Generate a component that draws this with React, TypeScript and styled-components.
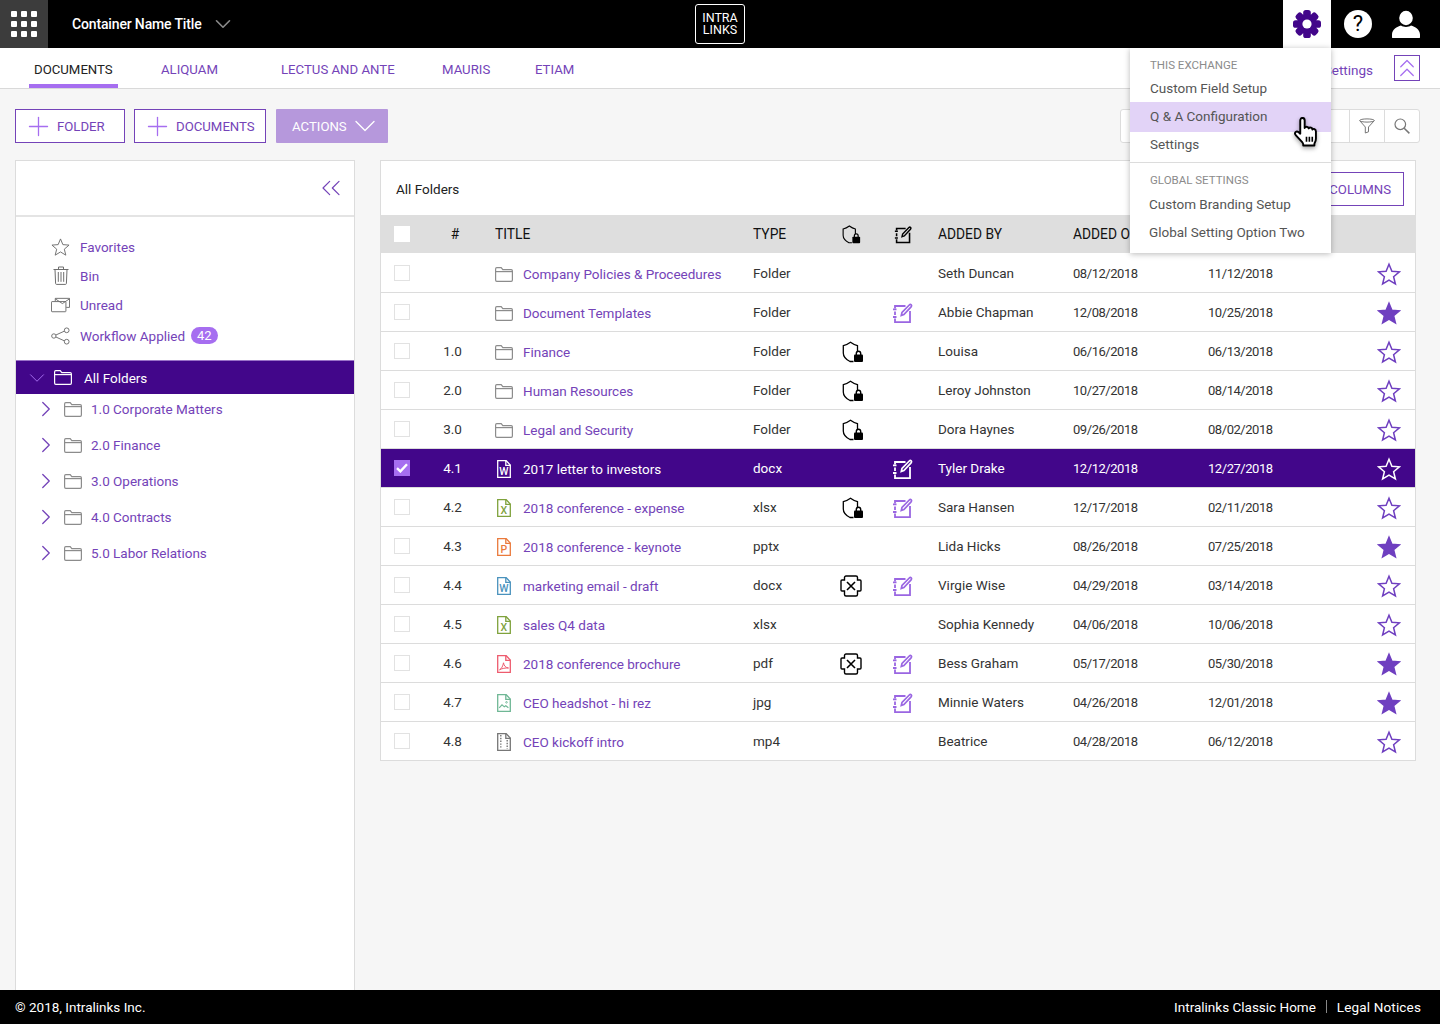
import React from 'react'
import styled, { createGlobalStyle } from 'styled-components'
import { ChevronDown, ChevronRight, ChevronsLeft, ChevronsUp, Plus } from 'lucide-react'

const PURPLE = '#7443b8'
const DARK = '#42068a'
const ACCENT = '#a66ef0'
const ICON_GRAY = '#6e6e6e'

const GlobalStyle = createGlobalStyle`
  html, body { margin: 0; padding: 0; }
  body { font-family: Roboto, "Liberation Sans", sans-serif; background: #f6f6f6; color: #333; }
  * { box-sizing: border-box; }
`

/* ---------- icons ---------- */

const FolderIcon = ({ color = '#8c8c8c' }: { color?: string }) => (
  <svg width="18" height="15" viewBox="0 0 18 15" fill="none" stroke={color} strokeWidth="1.2">
    <path d="M.6 13V2c0-.8.5-1.300 1.200-1.300h4.400l1.600 2h8.400c.7 0 1.200.5 1.200 1.200V13c0 .8-.5 1.300-1.200 1.300H1.800C1.100 14.300.6 13.800.6 13Z" />
    <path d="M.6 4.600h16.800" />
  </svg>
)

const FileIcon = ({ color, letter }: { color: string; letter?: string }) => (
  <svg width="14" height="18" viewBox="0 0 14 18" fill="none" stroke={color} strokeWidth="1.3">
    <path d="M.7.7h8.500l4.100 4.300v12.300H.7Z" />
    <path d="M8.800.7v4.700h4.500" />
    {letter && (
      <text x="6.900" y="14.800" fontSize="10.500" fontFamily="Roboto, sans-serif" fontWeight="500" textAnchor="middle" fill={color} stroke="none">
        {letter}
      </text>
    )}
  </svg>
)

const PdfFile = ({ color }: { color: string }) => (
  <svg width="14" height="18" viewBox="0 0 14 18" fill="none" stroke={color} strokeWidth="1.3">
    <path d="M.7.7h8.500l4.100 4.300v12.300H.7Z" />
    <path d="M8.800.7v4.700h4.500" />
    <path d="M2.500 14.800c2-1 3.500-3.800 4-7 .5 3 2 4.800 5 5.200-3-.2-6.500.4-9 1.800Z" strokeWidth="1" />
  </svg>
)

const ImageFile = ({ color }: { color: string }) => (
  <svg width="14" height="18" viewBox="0 0 14 18" fill="none" stroke={color} strokeWidth="1.3">
    <path d="M.7.7h8.500l4.100 4.300v12.300H.7Z" />
    <path d="M8.800.7v4.700h4.500" />
    <path d="M2.200 13.800l2.800-3 2.300 2 1.500-1 2.600 2" strokeWidth="1.100" />
    <circle cx="9.500" cy="8.300" r=".8" strokeWidth=".9" />
  </svg>
)

const VideoFile = ({ color }: { color: string }) => (
  <svg width="14" height="18" viewBox="0 0 14 18" fill="none" stroke={color} strokeWidth="1.3">
    <path d="M.7.7h8.500l4.100 4.300v12.300H.7Z" />
    <path d="M8.800.7v4.700h4.500" />
    <path d="M3.800 2v14M10.200 7v9" strokeDasharray="1.400 1.400" strokeWidth="1.400" />
  </svg>
)

const LockShield = ({ size = 22 }: { size?: number }) => (
  <svg width={size} height={size} viewBox="0 0 22 22" fill="none">
    <path d="M11.500 20.500H8C4 18.500 1.300 15.500 1.300 12V4.700C4 4 6 3 8.500 1.200c2.500 1.800 4.500 2.800 7 3.500v5.800" stroke="#000" strokeWidth="1.300" />
    <rect x="12" y="13.500" width="9" height="7.500" rx="1" fill="#000" />
    <path d="M14.300 14v-1.500a2.200 2.200 0 0 1 4.400 0V14" stroke="#000" strokeWidth="1.400" />
  </svg>
)

const CrossShield = () => (
  <svg width="22" height="22" viewBox="0 0 22 22" fill="none" stroke="#000" strokeWidth="1.400">
    <path d="M6 1h10c.8 0 1.500.7 1.500 1.500V5H20c.6 0 1 .4 1 1v9c0 .6-.4 1-1 1h-2.500v3.500c0 .8-.7 1.500-1.500 1.500H6c-.8 0-1.500-.7-1.500-1.500V16H2c-.6 0-1-.4-1-1V6c0-.6.4-1 1-1h2.500V2.500C4.500 1.700 5.200 1 6 1Z" />
    <path d="M7 7l8 8M15 7l-8 8" strokeWidth="1.600" />
  </svg>
)

const EditIcon = ({ color, size = 22 }: { color: string; size?: number }) => (
  <svg width={size} height={size} viewBox="0 0 22 22" fill="none" stroke={color}>
    <path d="M3 6.500V4h10.500M18 9v11.200H3v-3.700M3 9.500v3.500" strokeWidth="1.800" />
    <path d="M1 7.300h3.500M1 15h3.500" strokeWidth="1.800" />
    <path d="M9.300 13.500l.7-3L17.300 3c.6-.6 1.400-.6 1.900-.1.500.5.500 1.300-.1 1.900L11.900 12.600Z" strokeWidth="1.700" />
  </svg>
)

const StarIcon = ({ color, filled }: { color: string; filled?: boolean }) => (
  <svg width="24" height="24" viewBox="0 0 24 24" fill={filled ? color : 'none'} stroke={color} strokeWidth="1.500" strokeLinejoin="miter">
    <path d="M12 2.200l2.900 7 7.500.6-5.800 4.900 1.800 7.300-6.400-3.900-6.400 3.900 1.800-7.300-5.800-4.900 7.500-.6Z" />
  </svg>
)

const GearIcon = () => (
  <svg width="30" height="30" viewBox="0 0 30 30">
    {[0, 45, 90, 135, 180, 225, 270, 315].map((a) => (
      <rect key={a} x="11.200" y="1" width="7.600" height="10" rx="2.600" fill={DARK} transform={`rotate(${a} 15 15)`} />
    ))}
    <circle cx="15" cy="15" r="10" fill={DARK} />
    <circle cx="15" cy="15" r="4.600" fill="#fff" />
  </svg>
)

const UserIcon = () => (
  <svg width="28" height="28" viewBox="0 0 28 28" fill="#fff">
    <ellipse cx="14" cy="8" rx="6.800" ry="7.200" />
    <path d="M0 27.500v-3C0 19.500 5 16.500 9 15.500c1.500 1 3 1.400 5 1.400s3.500-.4 5-1.400c4 1 9 4 9 9v3c0 .3-.2.500-.5.500H.5c-.3 0-.5-.2-.5-.5Z" />
  </svg>
)

const HandCursor = () => (
  <svg width="25" height="33" viewBox="0 0 26 34">
    <path
      d="M6.500 3.500c0-1.600 1-2.700 2.300-2.700s2.300 1.100 2.300 2.700v7.700c.5-1 1.200-1.300 2-1.300 1.200 0 1.900.7 2.100 1.800.5-.7 1.200-1 2-.9 1.100.1 1.800.9 1.900 2 .5-.5 1.200-.7 1.900-.5 1.200.3 1.800 1.300 1.800 2.600v7.300c0 1.700-.4 3.100-1.200 4.400-.3.500-.4 1.100-.4 1.800v1.100H9.600v-1.100c0-1-.5-1.800-1.300-2.700L2 19c-1-1.100-1.300-2.400-.4-3.400.9-.9 2.300-.8 3.300.1l1.600 1.500Z"
      fill="#fff"
      stroke="#000"
      strokeWidth="2"
      strokeLinejoin="round"
    />
    <path d="M13 20.500v5M16 20.500v5M19 20.500v5" stroke="#000" strokeWidth="1.700" />
  </svg>
)

const FilterIcon = () => (
  <svg width="16" height="16" viewBox="0 0 16 16" fill="none" stroke="#777" strokeWidth="1">
    <ellipse cx="8" cy="2.500" rx="7.300" ry="1.600" />
    <path d="M.8 2.800L6.300 9v6l3.200-1.200V9l5.700-6.200" />
  </svg>
)

const SearchGlyph = () => (
  <svg width="16" height="16" viewBox="0 0 16 16" fill="none" stroke="#777" strokeWidth="1.200">
    <circle cx="6.300" cy="6.300" r="5.300" />
    <path d="M10.200 10.200l5.200 5.200" strokeWidth="1.500" />
  </svg>
)

const StarOutline = () => (
  <svg width="20" height="20" viewBox="0 0 20 20" fill="none" stroke={ICON_GRAY} strokeWidth="1">
    <path d="M10 1.500l2.500 6 6.500.5-5 4.300 1.600 6.300L10 15.200l-5.600 3.400L6 12.300 1 8l6.500-.5Z" />
  </svg>
)

const BinIcon = () => (
  <svg width="16" height="19" viewBox="0 0 16 19" fill="none" stroke={ICON_GRAY} strokeWidth="1">
    <path d="M.5 3.500h15M5.500 3.500V1h5v2.500M2 3.500l.6 14c0 .5.400.9.900.9h9c.5 0 .9-.4.900-.9l.6-14M5.300 6v9.800M8 6v9.800M10.700 6v9.800" />
  </svg>
)

const MailIcon = () => (
  <svg width="20" height="16" viewBox="0 0 20 16" fill="none" stroke={ICON_GRAY} strokeWidth="1">
    <path d="M4.500 4V1h15v9.500H16M4.500 1.500l7.500 5 7.500-5" />
    <path d="M.5 5c0-.4.300-.6.600-.6H15c.4 0 .7.300.7.600v9.500c0 .4-.3.600-.7.600H1.100c-.3 0-.6-.2-.6-.6Z" />
  </svg>
)

const ShareIcon = () => (
  <svg width="20" height="18" viewBox="0 0 20 18" fill="none" stroke={ICON_GRAY} strokeWidth="1">
    <circle cx="3" cy="9" r="2.300" />
    <circle cx="16.500" cy="3" r="2.500" />
    <circle cx="16.500" cy="15" r="2.500" />
    <path d="M5 8l9.300-4.200M5 10l9.300 4.200" />
  </svg>
)

const CheckMark = () => (
  <svg width="12" height="10" viewBox="0 0 12 10" fill="none" stroke="#fff" strokeWidth="2.400">
    <path d="M1 5.200l3.400 3.200L11 1.300" />
  </svg>
)

/* ---------- data ---------- */

type Row = {
  num: string
  title: string
  type: string
  file: React.ReactNode
  guard?: 'lock' | 'cross'
  edit?: boolean
  by: string
  added: string
  modified: string
  fav?: boolean
  selected?: boolean
}

const folder = <FolderIcon />

const rows: Row[] = [
  { num: '', title: 'Company Policies & Proceedures', type: 'Folder', file: folder, by: 'Seth Duncan', added: '08/12/2018', modified: '11/12/2018' },
  { num: '', title: 'Document Templates', type: 'Folder', file: folder, edit: true, by: 'Abbie Chapman', added: '12/08/2018', modified: '10/25/2018', fav: true },
  { num: '1.0', title: 'Finance', type: 'Folder', file: folder, guard: 'lock', by: 'Louisa', added: '06/16/2018', modified: '06/13/2018' },
  { num: '2.0', title: 'Human Resources', type: 'Folder', file: folder, guard: 'lock', by: 'Leroy Johnston', added: '10/27/2018', modified: '08/14/2018' },
  { num: '3.0', title: 'Legal and Security', type: 'Folder', file: folder, guard: 'lock', by: 'Dora Haynes', added: '09/26/2018', modified: '08/02/2018' },
  { num: '4.1', title: '2017 letter to investors', type: 'docx', file: <FileIcon color="#fff" letter="W" />, edit: true, by: 'Tyler Drake', added: '12/12/2018', modified: '12/27/2018', selected: true },
  { num: '4.2', title: '2018 conference - expense', type: 'xlsx', file: <FileIcon color="#7fa23c" letter="X" />, guard: 'lock', edit: true, by: 'Sara Hansen', added: '12/17/2018', modified: '02/11/2018' },
  { num: '4.3', title: '2018 conference - keynote', type: 'pptx', file: <FileIcon color="#ea7a3c" letter="P" />, by: 'Lida Hicks', added: '08/26/2018', modified: '07/25/2018', fav: true },
  { num: '4.4', title: 'marketing email - draft', type: 'docx', file: <FileIcon color="#4a92bd" letter="W" />, guard: 'cross', edit: true, by: 'Virgie Wise', added: '04/29/2018', modified: '03/14/2018' },
  { num: '4.5', title: 'sales Q4 data', type: 'xlsx', file: <FileIcon color="#7fa23c" letter="X" />, by: 'Sophia Kennedy', added: '04/06/2018', modified: '10/06/2018' },
  { num: '4.6', title: '2018 conference brochure', type: 'pdf', file: <PdfFile color="#ee5b6e" />, guard: 'cross', edit: true, by: 'Bess Graham', added: '05/17/2018', modified: '05/30/2018', fav: true },
  { num: '4.7', title: 'CEO headshot - hi rez', type: 'jpg', file: <ImageFile color="#6fb795" />, edit: true, by: 'Minnie Waters', added: '04/26/2018', modified: '12/01/2018', fav: true },
  { num: '4.8', title: 'CEO kickoff intro', type: 'mp4', file: <VideoFile color="#777" />, by: 'Beatrice', added: '04/28/2018', modified: '06/12/2018' },
]

const tabs = [
  { label: 'DOCUMENTS', width: 127, active: true },
  { label: 'ALIQUAM', width: 120 },
  { label: 'LECTUS AND ANTE', width: 161 },
  { label: 'MAURIS', width: 93 },
  { label: 'ETIAM', width: 80 },
]

const links = [
  { icon: <StarOutline />, label: 'Favorites' },
  { icon: <BinIcon />, label: 'Bin' },
  { icon: <MailIcon />, label: 'Unread' },
  { icon: <ShareIcon />, label: 'Workflow Applied', badge: '42' },
]

const tree = ['1.0 Corporate Matters', '2.0 Finance', '3.0 Operations', '4.0 Contracts', '5.0 Labor Relations']

/* ---------- page ---------- */

const App: React.FC = () => (
  <Page>
    <GlobalStyle />
    <TopBar>
      <TopLeft>
        <AppsButton>
          {Array.from({ length: 9 }).map((_, i) => (
            <Dot key={i} />
          ))}
        </AppsButton>
        <ContainerName>Container Name Title</ContainerName>
        <ChevronDown size={26} color="#8a8a8a" strokeWidth={1.5} />
      </TopLeft>
      <Logo>
        <span>INTRA</span>
        <span>LINKS</span>
      </Logo>
      <TopRight>
        <GearTab>
          <GearIcon />
        </GearTab>
        <TopIcon>
          <HelpCircle>?</HelpCircle>
        </TopIcon>
        <TopIcon>
          <UserIcon />
        </TopIcon>
      </TopRight>
    </TopBar>

    <TabBar>
      <TabList>
        {tabs.map((t) => (
          <TabSlot key={t.label} style={{ width: t.width }}>
            <Tab $active={t.active}>{t.label}</Tab>
          </TabSlot>
        ))}
      </TabList>
      <TabRight>
        <SettingsLink>Settings</SettingsLink>
        <CollapseButton>
          <ChevronsUp size={30} color={ACCENT} strokeWidth={1} />
        </CollapseButton>
      </TabRight>
    </TabBar>

    <Toolbar>
      <OutlineButton $width={110}>
        <Plus size={31} strokeWidth={1} color={ACCENT} />
        FOLDER
      </OutlineButton>
      <OutlineButton $width={132}>
        <Plus size={31} strokeWidth={1} color={ACCENT} />
        DOCUMENTS
      </OutlineButton>
      <ActionsButton>
        ACTIONS
        <ChevronDown size={36} strokeWidth={0.9} color="#fff" />
      </ActionsButton>
      <SearchBox>
        <SearchInput />
        <SearchCell>
          <FilterIcon />
        </SearchCell>
        <SearchCell>
          <SearchGlyph />
        </SearchCell>
      </SearchBox>
    </Toolbar>

    <Main>
      <Sidebar>
        <SidebarHead>
          <ChevronsLeft size={32} color={PURPLE} strokeWidth={0.9} />
        </SidebarHead>
        <QuickLinks>
          {links.map((l) => (
            <QuickLink key={l.label}>
              <QuickIcon>{l.icon}</QuickIcon>
              <LinkText>{l.label}</LinkText>
              {l.badge && <Badge>{l.badge}</Badge>}
            </QuickLink>
          ))}
        </QuickLinks>
        <RootFolder>
          <ChevronDown size={26} color={ACCENT} strokeWidth={0.9} />
          <FolderIcon color="#fff" />
          <RootLabel>All Folders</RootLabel>
        </RootFolder>
        <Tree>
          {tree.map((t) => (
            <TreeItem key={t}>
              <ChevronRight size={26} color={PURPLE} strokeWidth={1.2} />
              <FolderIcon />
              <TreeLabel>{t}</TreeLabel>
            </TreeItem>
          ))}
        </Tree>
      </Sidebar>

      <TablePanel>
        <PanelHead>
          <PanelTitle>All Folders</PanelTitle>
          <ColumnsButton>COLUMNS</ColumnsButton>
        </PanelHead>
        <HeadRow>
          <Cell>
            <Check $head />
          </Cell>
          <HeadNum>#</HeadNum>
          <HeadTitle>TITLE</HeadTitle>
          <Cell>TYPE</Cell>
          <Cell>
            <LockShield size={19} />
          </Cell>
          <EditHeadCell>
            <EditIcon color="#000" size={19} />
          </EditHeadCell>
          <Cell>ADDED BY</Cell>
          <Cell>ADDED ON</Cell>
          <Cell />
          <Cell />
        </HeadRow>
        {rows.map((r) => (
          <DataRow key={r.title} $selected={r.selected}>
            <Cell>
              <Check $on={r.selected}>{r.selected && <CheckMark />}</Check>
            </Cell>
            <NumCell>{r.num}</NumCell>
            <TitleCell>
              <FileSlot>{r.file}</FileSlot>
              <TitleLink $selected={r.selected}>{r.title}</TitleLink>
            </TitleCell>
            <Cell>{r.type}</Cell>
            <IconCell>
              {r.guard === 'lock' && <LockShield />}
              {r.guard === 'cross' && (
                <CrossSlot>
                  <CrossShield />
                </CrossSlot>
              )}
            </IconCell>
            <IconCell>{r.edit && <EditIcon color={r.selected ? '#fff' : '#9a66e2'} />}</IconCell>
            <Cell>{r.by}</Cell>
            <DateCell>{r.added}</DateCell>
            <DateCell>{r.modified}</DateCell>
            <IconCell>
              <StarIcon color={r.selected ? '#fff' : '#6f3fc0'} filled={r.fav} />
            </IconCell>
          </DataRow>
        ))}
      </TablePanel>
    </Main>

    <Footer>
      <span>© 2018, Intralinks Inc.</span>
      <FooterLinks>
        <span>Intralinks Classic Home</span>
        <FooterSep />
        <LegalLink>Legal Notices</LegalLink>
      </FooterLinks>
    </Footer>

    <Menu>
      <MenuGroup>
        <MenuHeading>THIS EXCHANGE</MenuHeading>
        <MenuItem>Custom Field Setup</MenuItem>
        <MenuItem $hover>Q &amp; A Configuration</MenuItem>
        <MenuItem>Settings</MenuItem>
      </MenuGroup>
      <MenuDivider />
      <MenuGroup>
        <MenuHeading $loose>GLOBAL SETTINGS</MenuHeading>
        <MenuItem $tight>Custom Branding Setup</MenuItem>
        <MenuItem $tight>Global Setting Option Two</MenuItem>
      </MenuGroup>
      <Cursor>
        <HandCursor />
      </Cursor>
    </Menu>
  </Page>
)

const Page = styled.div`
  position: relative;
  width: 1440px;
  height: 1024px;
  display: flex;
  flex-direction: column;
  overflow: hidden;
  font-size: 13.5px;
`

const TopBar = styled.header`
  height: 48px;
  flex: none;
  background: #000;
  display: grid;
  grid-template-columns: 1fr auto 1fr;
`

const TopLeft = styled.div`
  display: flex;
  align-items: center;
`

const AppsButton = styled.div`
  width: 48px;
  height: 48px;
  background: #3c3c3c;
  display: grid;
  grid-template-columns: repeat(3, 6px);
  grid-auto-rows: 6px;
  gap: 4px;
  align-content: center;
  justify-content: center;
`

const Dot = styled.i`
  display: block;
  border-radius: 1px;
  background: #fff;
`

const ContainerName = styled.div`
  margin: 0 8px 0 24px;
  color: #fff;
  font-weight: 500;
  font-size: 14px;
  letter-spacing: -0.15px;
`

const Logo = styled.div`
  align-self: center;
  width: 50px;
  height: 40px;
  border: 1px solid #fff;
  border-radius: 3px;
  color: #fff;
  font-size: 12.5px;
  line-height: 12.5px;
  display: flex;
  flex-direction: column;
  align-items: center;
  justify-content: center;
`

const TopRight = styled.div`
  display: flex;
  justify-content: flex-end;
  padding-right: 10px;
`

const GearTab = styled.div`
  width: 48px;
  height: 48px;
  margin-right: 3px;
  background: #fff;
  display: flex;
  align-items: center;
  justify-content: center;
`

const TopIcon = styled.div`
  width: 48px;
  height: 48px;
  display: flex;
  align-items: center;
  justify-content: center;
`

const HelpCircle = styled.div`
  width: 28px;
  height: 28px;
  border-radius: 50%;
  background: #fff;
  color: #000;
  font-size: 22px;
  line-height: 28px;
  text-align: center;
`

const TabBar = styled.nav`
  height: 41px;
  flex: none;
  background: #fff;
  border-bottom: 1px solid #d9d9d9;
  display: flex;
  justify-content: space-between;
  padding: 0 20px 0 29px;
`

const TabList = styled.div`
  display: flex;
`

const TabSlot = styled.div`
  display: flex;
`

const Tab = styled.div<{ $active?: boolean }>`
  height: 40px;
  padding: 6px 5px 0;
  display: flex;
  align-items: center;
  font-size: 13.2px;
  color: ${(p) => (p.$active ? '#222' : PURPLE)};
  border-bottom: 4px solid ${(p) => (p.$active ? ACCENT : 'transparent')};
`

const TabRight = styled.div`
  display: flex;
  align-items: center;
  gap: 21px;
`

const SettingsLink = styled.span`
  margin-top: 4px;
  color: ${PURPLE};
`

const CollapseButton = styled.div`
  width: 26px;
  height: 26px;
  border: 1px solid ${PURPLE};
  display: flex;
  align-items: center;
  justify-content: center;

  svg {
    flex: none;
  }
`

const Toolbar = styled.div`
  height: 71px;
  flex: none;
  display: flex;
  align-items: flex-start;
  padding: 20px 20px 0 15px;
  gap: 9px;
`

const OutlineButton = styled.div<{ $width: number }>`
  width: ${(p) => p.$width}px;
  height: 34px;
  border: 1px solid ${PURPLE};
  background: #fff;
  color: ${PURPLE};
  font-size: 13.2px;
  display: flex;
  align-items: center;
  gap: 3px;
  padding-left: 7px;
`

const ActionsButton = styled.div`
  width: 112px;
  height: 34px;
  margin-left: 1px;
  border-radius: 1px;
  background: #b698dc;
  color: #fff;
  font-size: 13.2px;
  display: flex;
  align-items: center;
  padding-left: 16px;
`

const SearchBox = styled.div`
  margin-left: auto;
  width: 300px;
  height: 34px;
  background: #fff;
  border: 1px solid #dcdcdc;
  border-radius: 3px;
  display: flex;
`

const SearchInput = styled.div`
  flex: 1;
`

const SearchCell = styled.div`
  width: 35px;
  border-left: 1px solid #dcdcdc;
  display: flex;
  align-items: center;
  justify-content: center;
`

const Main = styled.main`
  flex: 1;
  min-height: 0;
  display: flex;
  gap: 25px;
  padding: 0 24px 0 15px;
`

const Sidebar = styled.aside`
  width: 340px;
  background: #fff;
  border: 1px solid #dcdcdc;
  border-bottom: none;
`

const SidebarHead = styled.div`
  height: 56px;
  border-bottom: 2px solid #e4e4e4;
  display: flex;
  align-items: center;
  justify-content: flex-end;
  padding-right: 7px;
`

const QuickLinks = styled.div`
  padding: 15px 0 8px 35px;
`

const QuickLink = styled.div`
  height: 29px;
  display: flex;
  align-items: center;
  gap: 10px;

  &:last-child {
    height: 33px;
  }
`

const QuickIcon = styled.div`
  width: 19px;
  display: flex;
  justify-content: center;
`

const LinkText = styled.span`
  color: ${PURPLE};
`

const TreeLabel = styled(LinkText)`
  margin-left: 4px;
`

const Badge = styled.span`
  margin-left: -4px;
  padding: 0 6px;
  height: 17px;
  line-height: 17px;
  border-radius: 9px;
  background: ${ACCENT};
  color: #fff;
  font-size: 13px;
`

const RootFolder = styled.div`
  height: 34px;
  background: ${DARK};
  display: flex;
  align-items: center;
  padding-left: 8px;
  gap: 4px;
  border-top: 1px solid #9a72c8;
`

const RootLabel = styled.span`
  margin-left: 8px;
  color: #fff;
`

const Tree = styled.div`
  padding-left: 17px;
`

const TreeItem = styled.div`
  height: 36px;
  display: flex;
  align-items: center;
  gap: 5px;

  &:first-child {
    margin-top: -3px;
  }
`

const TablePanel = styled.section`
  width: 1036px;
  align-self: flex-start;
  background: #fff;
  border: 1px solid #dcdcdc;
`

const PanelHead = styled.div`
  height: 54px;
  display: flex;
  align-items: center;
  justify-content: space-between;
  padding: 2px 11px 0 15px;
`

const PanelTitle = styled.div`
  color: #222;
`

const ColumnsButton = styled.div`
  width: 110px;
  height: 34px;
  border: 1px solid ${PURPLE};
  color: ${PURPLE};
  font-size: 13.2px;
  display: flex;
  align-items: center;
  justify-content: flex-end;
  padding-right: 12px;
`

const columns = '43px 57px 272px 89px 50px 46px 135px 135px 169px 38px'

const HeadRow = styled.div`
  height: 38px;
  margin: 0 -1px 1px;
  padding-left: 1px;
  background: #dedede;
  display: grid;
  grid-template-columns: ${columns};
  align-items: center;
  color: #111;
  font-size: 13.8px;
`

const DataRow = styled.div<{ $selected?: boolean }>`
  height: 39px;
  display: grid;
  grid-template-columns: ${columns};
  align-items: center;
  background: ${(p) => (p.$selected ? DARK : 'transparent')};
  color: ${(p) => (p.$selected ? '#fff' : '#333')};
  border-bottom: 1px solid #dcdcdc;

  &:last-child {
    height: 38px;
    border-bottom: none;
  }
`

const Cell = styled.div`
  display: flex;
  align-items: center;
  min-width: 0;
  white-space: nowrap;
`

const NumCell = styled(Cell)`
  justify-content: center;
`

const HeadNum = styled(NumCell)`
  padding-left: 5px;
`

const HeadTitle = styled(Cell)`
  padding-left: 14px;
`

const EditHeadCell = styled(Cell)`
  padding-left: 2px;
`

const IconCell = styled(Cell)`
  padding-top: 2px;
`

const CrossSlot = styled.span`
  display: flex;
  margin-left: -2px;
`

const TitleCell = styled(Cell)`
  padding: 2px 0 0 14px;
`

const DateCell = styled(Cell)`
  font-size: 13px;
  letter-spacing: -0.45px;
`

const FileSlot = styled.span`
  width: 18px;
  margin-right: 10px;
  display: flex;
  align-items: center;
  justify-content: center;
`

const TitleLink = styled.span<{ $selected?: boolean }>`
  color: ${(p) => (p.$selected ? '#fff' : PURPLE)};
`

const Check = styled.div<{ $on?: boolean; $head?: boolean }>`
  margin-left: 13px;
  width: 16px;
  height: 16px;
  background: ${(p) => (p.$on ? ACCENT : '#fff')};
  border: 1px solid ${(p) => (p.$on || p.$head ? 'transparent' : '#e2e2e2')};
  display: flex;
  align-items: center;
  justify-content: center;
`

const Footer = styled.footer`
  height: 34px;
  flex: none;
  background: #000;
  color: #fff;
  display: flex;
  align-items: center;
  justify-content: space-between;
  padding: 0 19px 1px 15px;
`

const FooterLinks = styled.div`
  display: flex;
  align-items: center;
  gap: 10px;
`

const LegalLink = styled.span`
  letter-spacing: 0.15px;
`

const FooterSep = styled.i`
  width: 1px;
  height: 13px;
  background: #888;
`

const Menu = styled.div`
  position: absolute;
  left: 1130px;
  top: 48px;
  width: 201px;
  height: 205px;
  background: #fff;
  box-shadow: 0 1px 6px rgba(0, 0, 0, 0.28);
`

const MenuGroup = styled.div`
  padding-top: 9px;
`

const MenuHeading = styled.div<{ $loose?: boolean }>`
  padding-left: 20px;
  height: 17px;
  line-height: 16px;
  margin-bottom: ${(p) => (p.$loose ? 1 : 0)}px;
  font-size: 11.5px;
  color: #8b8b8b;
`

const MenuItem = styled.div<{ $hover?: boolean; $tight?: boolean }>`
  height: ${(p) => (p.$hover ? 30 : 28)}px;
  margin-bottom: ${(p) => (p.$hover ? -2 : 0)}px;
  line-height: 28px;
  padding-left: ${(p) => (p.$tight ? 19 : 20)}px;
  color: #555;
  background: ${(p) => (p.$hover ? '#e2d3f7' : 'transparent')};
`

const MenuDivider = styled.div`
  height: 1px;
  margin-top: 4px;
  background: #dcdcdc;
`

const Cursor = styled.div`
  position: absolute;
  left: 164px;
  top: 69px;
  filter: drop-shadow(0 2px 2px rgba(0, 0, 0, 0.35));
`

export default App
